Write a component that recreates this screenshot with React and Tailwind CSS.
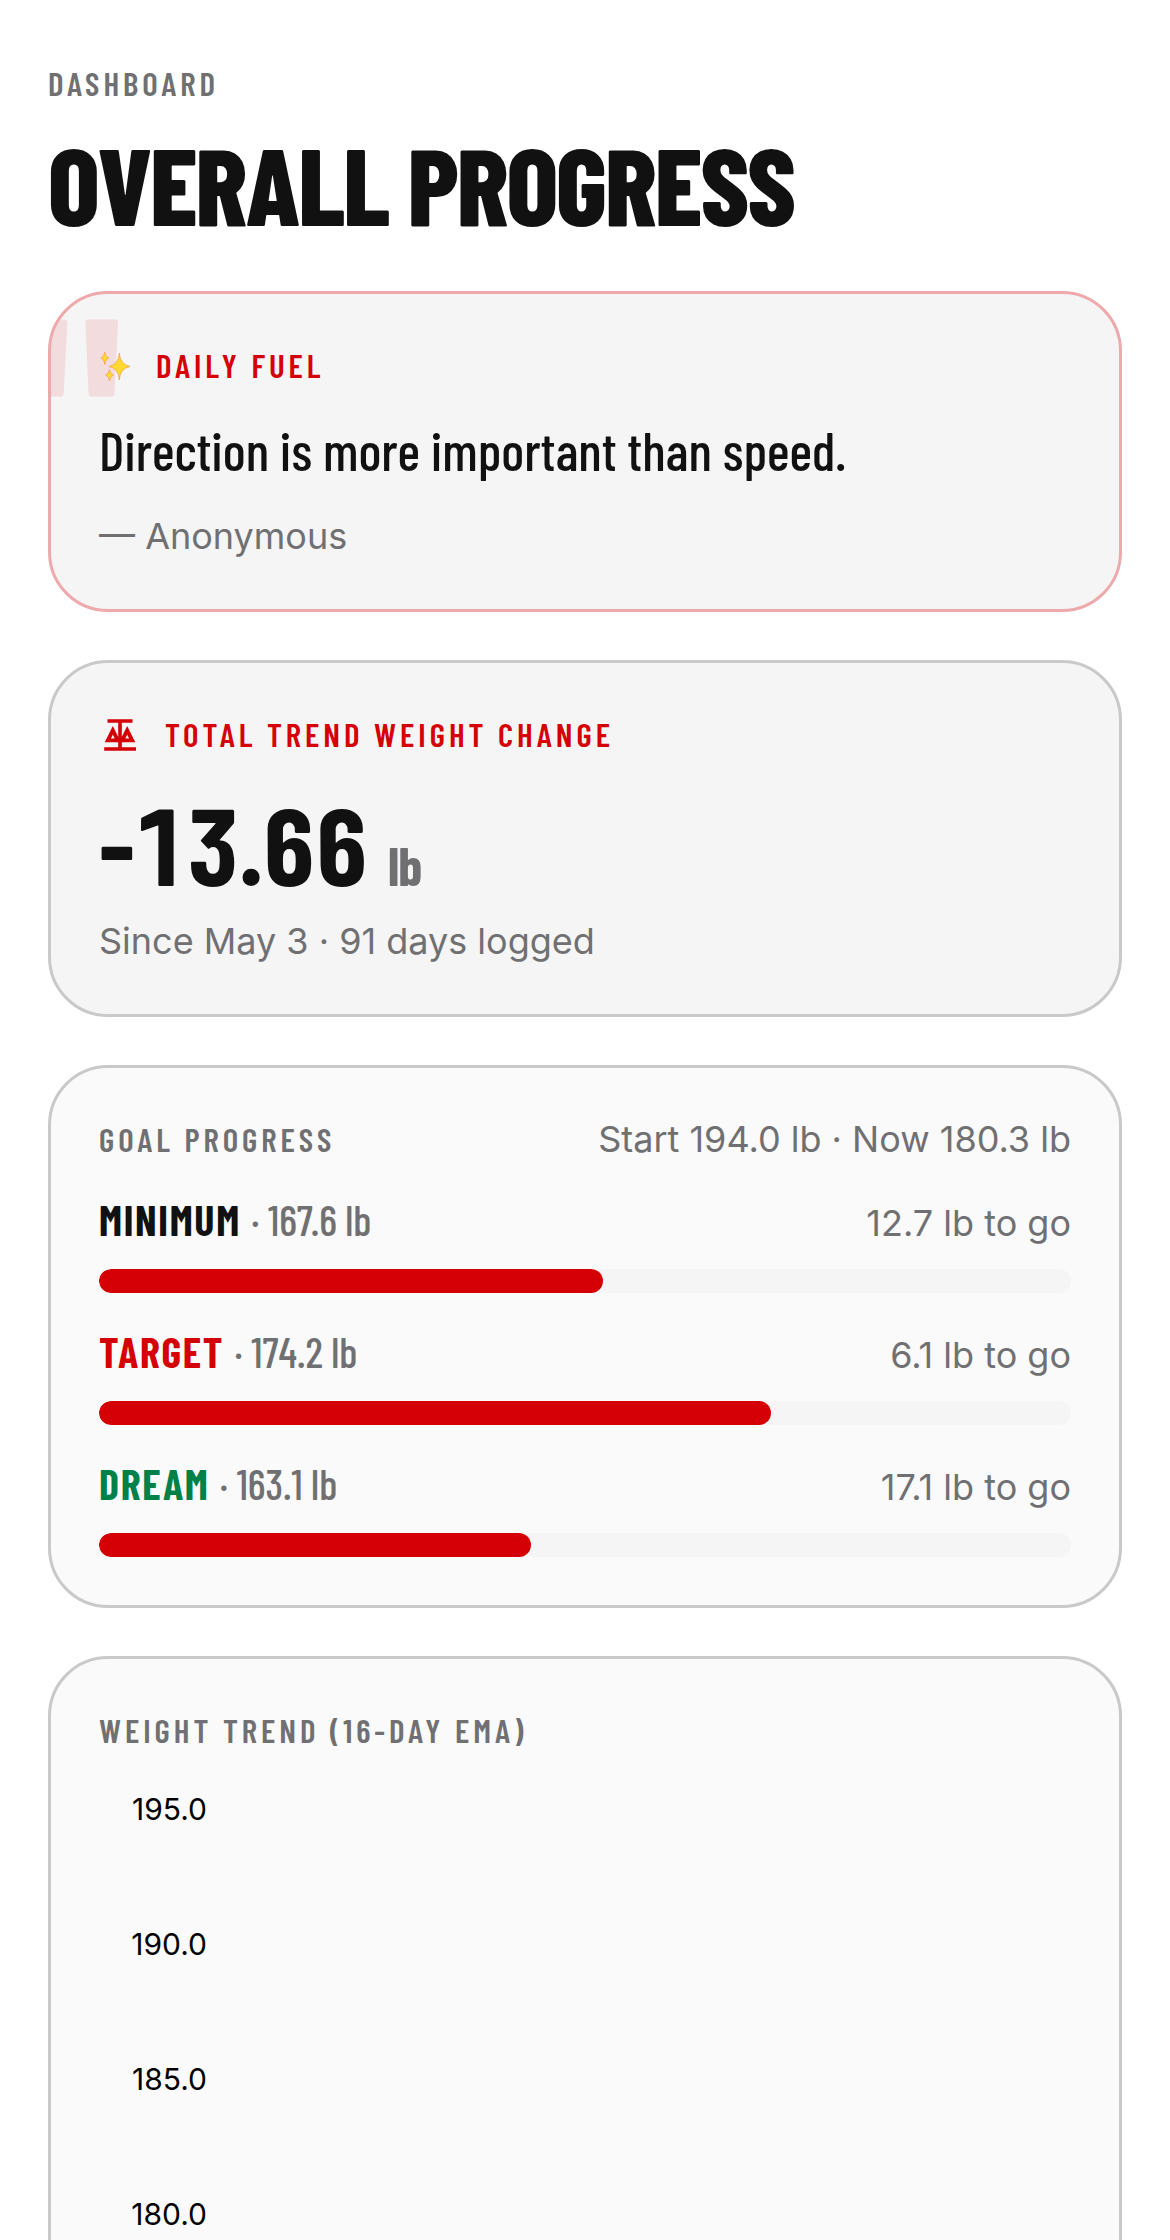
const goals = [
  { name: 'Minimum', weight: '167.6', toGo: '12.7', percent: 51.9, color: 'text-[#111111]' },
  { name: 'Target', weight: '174.2', toGo: '6.1', percent: 69.1, color: 'text-[#d50005]' },
  { name: 'Dream', weight: '163.1', toGo: '17.1', percent: 44.4, color: 'text-[#008148]' },
];

const ticks = ['195.0', '190.0', '185.0', '180.0'];

const Label = ({ as: Tag = 'h2', className = 'text-[#707072]', children }) => (
  <Tag className={`font-['Barlow_Condensed',sans-serif] text-[33px] leading-[46px] font-semibold uppercase tracking-[0.12em] ${className}`}>
    {children}
  </Tag>
);

const Card = ({ className = 'border-[#c9c9c9] bg-[#fafafa]', children }) => (
  <section className={`relative overflow-hidden rounded-[60px] border-3 p-12 ${className}`}>
    {children}
  </section>
);

const SparklesIcon = () => (
  <svg viewBox="0 0 33 36" className="w-[33px] h-9" aria-hidden="true">
    <g fill="#ffd92e" stroke="#f3a552" strokeWidth="0.8" strokeLinejoin="round">
      <path d="M20.3 6Q21 17.500 31 19.500Q21 21.500 20.3 33Q19.600 21.500 10 19.500Q19.600 17.500 20.3 6Z" />
      <path d="M5.8 5Q6.400 10 10 11Q6.400 12 5.8 17.500Q5.200 12 1.800 11Q5.200 10 5.8 5Z" />
      <path d="M10.5 22.500Q11.100 27 14.500 28Q11.100 29 10.5 34Q9.900 29 6.500 28Q9.900 27 10.5 22.500Z" />
    </g>
  </svg>
);

const ScaleIcon = () => (
  <svg viewBox="0 0 42 42" className="w-[42px] h-[42px]" fill="none" stroke="currentColor" aria-hidden="true">
    <path strokeWidth="3.6" d="M8.500 8H33.500M5.200 36H37M21 6.200V37.800" />
    <path strokeWidth="3.8" d="M8.800 27.300 13.800 17.300 18.800 27.300ZM23.200 27.300 28.200 17.300 33.200 27.300Z" />
  </svg>
);

const GoalRow = ({ goal }) => (
  <li>
    <div className="flex items-baseline justify-between">
      <span className="font-['Barlow_Condensed',sans-serif] text-[42px] leading-[60px] font-medium text-[#707072]">
        <span className={`font-bold uppercase tracking-[0.04em] ${goal.color}`}>{goal.name} </span>· {goal.weight} lb
      </span>
      <span className="text-[36px] leading-[48px]">{goal.toGo} lb to go</span>
    </div>
    <div className="mt-5 h-6 overflow-hidden rounded-full bg-[#f5f5f5]">
      <div className="h-full rounded-full bg-[#d50005]" style={{ width: `${goal.percent}%` }} />
    </div>
  </li>
);

export default function App() {
  return (
    <main className="min-h-screen bg-white px-12 pt-[60px] font-['Inter',sans-serif] text-[#707072]">
      <header>
        <Label as="p">Dashboard</Label>
        <h1 className="mt-[23px] font-['Barlow_Condensed',sans-serif] text-[108px] leading-[108px] font-extrabold uppercase tracking-[-0.02em] text-[#111111]">
          Overall Progress
        </h1>
      </header>

      <div className="mt-[54px] flex flex-col gap-12">
        <Card className="border-[#eea9ac] bg-[#f5f5f5]">
          <span aria-hidden="true" className="absolute -top-12 -left-6 font-['Barlow_Condensed',sans-serif] text-[360px] leading-[360px] font-medium text-[#d50005]/10">
            "
          </span>
          <div className="relative">
            <div className="flex items-center gap-6">
              <SparklesIcon />
              <Label className="text-[#d50005]">Daily Fuel</Label>
            </div>
            <blockquote className="mt-6 font-['Barlow_Condensed',sans-serif] text-[54px] leading-[75px] font-medium text-[#111111]">
              Direction is more important than speed.
            </blockquote>
            <p className="mt-6 text-[36px] leading-[50px]">— Anonymous</p>
          </div>
        </Card>

        <Card className="border-[#c9c9c9] bg-[#f5f5f5]">
          <div className="flex items-center gap-6 text-[#d50005]">
            <ScaleIcon />
            <Label className="text-[#d50005]">Total Trend Weight Change</Label>
          </div>
          <p className="mt-8 font-['Barlow_Condensed',sans-serif] text-[108px] leading-[108px] font-bold tabular-nums tracking-[-0.01em] text-[#111111]">
            -13.66 <span className="text-[54px] leading-none text-[#707072]">lb</span>
          </p>
          <p className="mt-[19px] text-[36px] leading-[50px]">Since May 3 · 91 days logged</p>
        </Card>

        <Card>
          <div className="flex items-center justify-between">
            <Label>Goal Progress</Label>
            <span className="text-[36px] leading-[46px]">Start 194.0 lb · Now 180.3 lb</span>
          </div>
          <ul className="mt-[27px] flex flex-col gap-7">
            {goals.map((goal) => (
              <GoalRow key={goal.name} goal={goal} />
            ))}
          </ul>
        </Card>

        <Card>
          <Label>Weight Trend (16-Day EMA)</Label>
          <ul className="mt-[34px] flex w-[108px] flex-col gap-[90px] pb-24 text-right text-[30px] leading-[45px] text-black">
            {ticks.map((tick) => (
              <li key={tick}>{tick}</li>
            ))}
          </ul>
        </Card>
      </div>
    </main>
  );
}
